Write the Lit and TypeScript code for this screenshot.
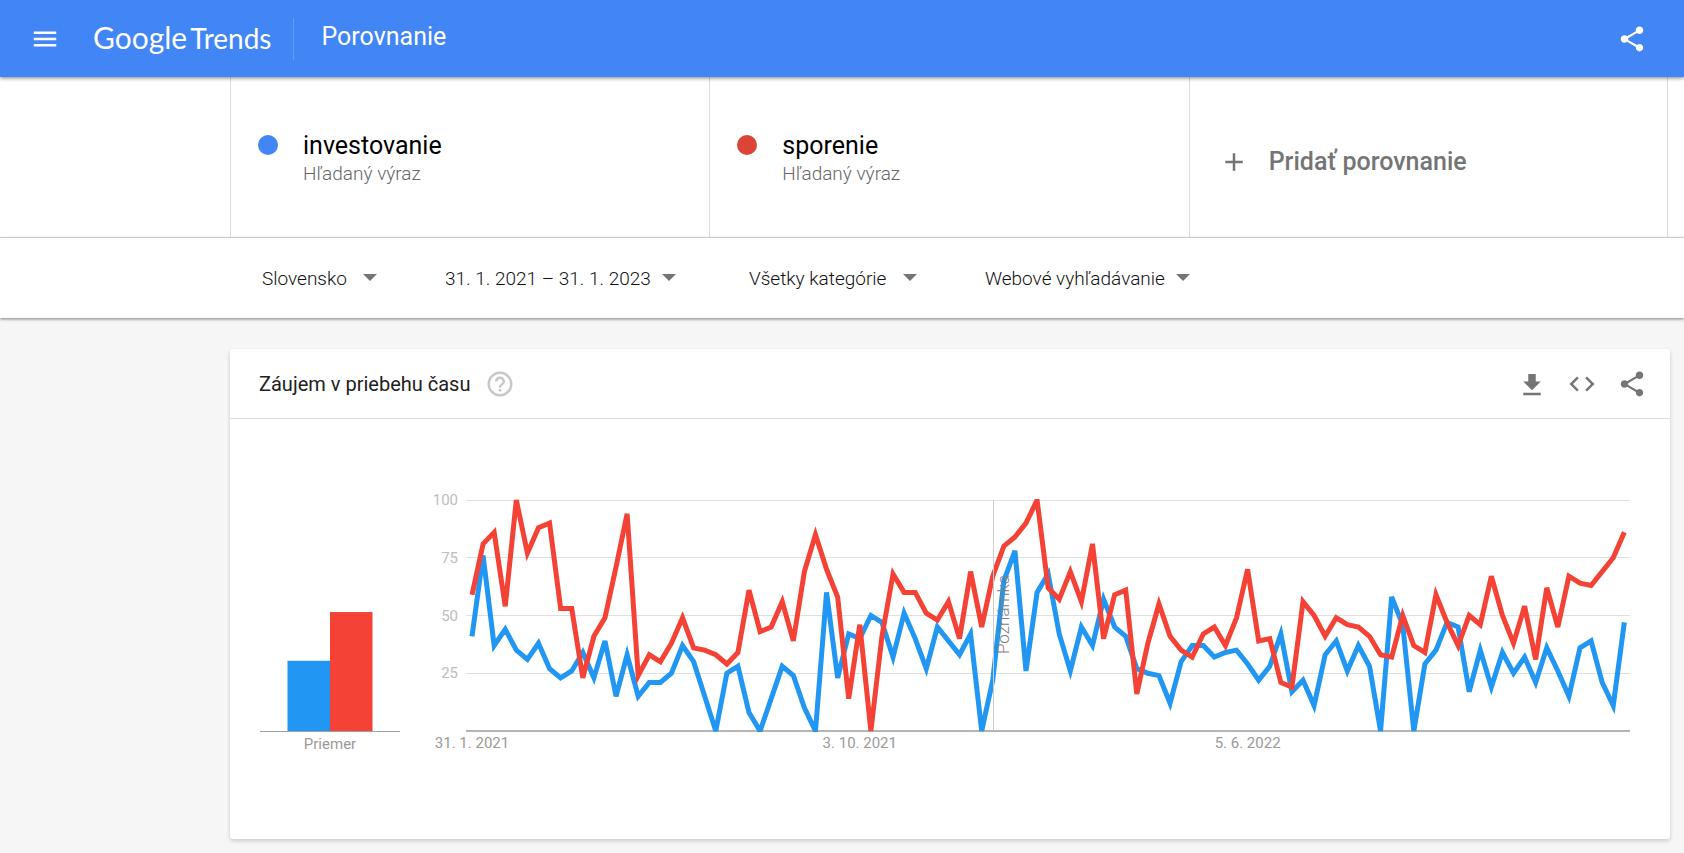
import { LitElement, html, svg, css } from "lit";
import { customElement, property } from "lit/decorators.js";

const SHARE =
  "M18 16.08c-.76 0-1.44.3-1.96.77L8.91 12.7c.05-.23.09-.46.09-.7s-.04-.47-.09-.7l7.05-4.11c.54.5 1.25.81 2.04.81 1.66 0 3-1.34 3-3s-1.34-3-3-3-3 1.34-3 3c0 .24.04.47.09.7L8.04 9.81C7.5 9.31 6.79 9 6 9c-1.66 0-3 1.34-3 3s1.34 3 3 3c.79 0 1.5-.31 2.04-.81l7.12 4.16c-.05.21-.08.43-.08.65 0 1.61 1.31 2.92 2.92 2.92s2.92-1.31 2.92-2.92-1.31-2.92-2.92-2.92z";
const ICONS: Record<string, string> = {
  menu: "M3 18h18v-2H3v2zm0-5h18v-2H3v2zm0-7v2h18V6H3z",
  share: SHARE,
  add: "M19 13h-6v6h-2v-6H5v-2h6V5h2v6h6v2z",
  help: "M11 18h2v-2h-2v2zm1-16C6.48 2 2 6.48 2 12s4.48 10 10 10 10-4.48 10-10S17.52 2 12 2zm0 18c-4.41 0-8-3.59-8-8s3.59-8 8-8 8 3.59 8 8-3.59 8-8 8zm0-14c-2.21 0-4 1.79-4 4h2c0-1.1.9-2 2-2s2 .9 2 2c0 2-3 1.75-3 5h2c0-2.25 3-2.5 3-5 0-2.21-1.79-4-4-4z",
  download: "M19 10h-4V4H9v6H5l7 7 7-7zM5 19v2h14v-2H5z",
  code: "M9.4 16.6L4.8 12l4.6-4.6L8 6l-6 6 6 6 1.4-1.4zm5.2 0l4.6-4.6-4.6-4.6L16 6l6 6-6 6-1.4-1.4z",
};

const icon = (name: string) => html`
  <svg class="icon" viewBox="0 0 24 24" aria-hidden="true"><path d=${ICONS[name]}></path></svg>
`;

const INVESTOVANIE = [
  41, 76, 37, 44, 35, 31, 38, 27, 23, 26, 34, 23, 39, 15, 33, 15, 21, 21, 25, 37, 30, 15, 0, 25, 28,
  8, 0, 14, 28, 24, 10, 0, 60, 23, 42, 40, 50, 47, 32, 51, 40, 27, 45, 39, 33, 42, 0, 22, 65, 78,
  26, 60, 68, 42, 26, 45, 37, 57, 45, 41, 27, 25, 24, 12, 30, 37, 37, 32, 34, 35, 29, 22, 28, 42, 17,
  22, 11, 33, 39, 26, 37, 28, 0, 58, 46, 0, 29, 35, 47, 45, 17, 35, 19, 34, 25, 32, 21, 36, 26, 15,
  36, 39, 21, 11, 47,
];
const SPORENIE = [
  59, 81, 86, 54, 100, 77, 88, 90, 53, 53, 23, 41, 49, 71, 94, 24, 33, 30, 38, 49, 36, 35, 33, 29, 34,
  61, 43, 45, 56, 39, 69, 85, 70, 58, 14, 46, 0, 41, 68, 60, 60, 51, 48, 56, 40, 69, 45, 67, 80, 84,
  90, 100, 62, 57, 69, 56, 81, 40, 59, 61, 16, 38, 55, 41, 35, 32, 42, 45, 37, 49, 70, 39, 40, 21, 19,
  56, 50, 41, 49, 46, 45, 41, 33, 32, 50, 37, 34, 59, 47, 37, 50, 46, 67, 50, 38, 54, 31, 62, 45, 67,
  64, 63, 69, 75, 86,
];

// Geometry shared by both charts, in viewBox units.
const BASE = 251;
const UNIT = 2.31;
const FIRST = 42;
const STEP = 11.08;
const yOf = (v: number) => BASE - v * UNIT;
const xOf = (i: number) => FIRST + i * STEP;

const chartStyles = css`
  :host {
    display: block;
    font-family: Roboto, sans-serif;
  }
  svg {
    display: block;
    width: 100%;
    height: auto;
    overflow: visible;
  }
  text {
    font-size: 15px;
    fill: #9a9a9a;
  }
  .middle {
    text-anchor: middle;
  }
  .axis {
    stroke: #9e9e9e;
    shape-rendering: crispEdges;
  }
  .blue {
    fill: #2196f3;
  }
  .red {
    fill: #f44336;
  }
`;

@customElement("average-chart")
class AverageChart extends LitElement {
  static styles = chartStyles;

  render() {
    const bars = [
      { tone: "blue", value: 30.4 },
      { tone: "red", value: 51.5 },
    ];
    return html`
      <svg viewBox="0 0 140 280" role="img" aria-label="Priemer">
        ${bars.map(
          (b, i) => svg`<rect class=${b.tone} x=${27.5 + i * 42.5} y=${yOf(b.value)}
            width="42.5" height=${b.value * UNIT}></rect>`
        )}
        <line class="axis" x1="0" x2="140" y1="251.5" y2="251.5"></line>
        <text class="middle" x="70" y="269">Priemer</text>
      </svg>
    `;
  }
}

@customElement("timeline-chart")
class TimelineChart extends LitElement {
  static styles = [
    chartStyles,
    css`
      .grid {
        stroke: #e0e0e0;
        shape-rendering: crispEdges;
      }
      .axis {
        stroke: #b5b5b5;
        stroke-width: 2;
      }
      .scale {
        text-anchor: end;
        fill: #bdbdbd;
      }
      .series {
        fill: none;
        stroke-width: 5;
      }
      .series.blue {
        stroke: #2196f3;
      }
      .series.red {
        stroke: #f44336;
      }
      .note-line {
        stroke: #cccccc;
        shape-rendering: crispEdges;
      }
      .note {
        font-size: 17px;
        font-weight: 300;
        fill: #808080;
      }
    `,
  ];

  render() {
    const points = (data: number[]) => data.map((v, i) => `${xOf(i)},${yOf(v)}`).join(" ");
    const dates = [
      { at: 0, text: "31. 1. 2021" },
      { at: 35, text: "3. 10. 2021" },
      { at: 70, text: "5. 6. 2022" },
    ];
    return html`
      <svg viewBox="0 0 1210 280" role="img" aria-label="Záujem v priebehu času">
        <clipPath id="plot"><rect x="36" y="19" width="1164" height="233"></rect></clipPath>
        ${[25, 50, 75, 100].map(
          (v) => svg`
            <line class="grid" x1="36" x2="1200" y1=${yOf(v)} y2=${yOf(v)}></line>
            <text class="scale" x="28" y=${yOf(v) + 5}>${v}</text>`
        )}
        <line class="axis" x1="36" x2="1200" y1=${BASE} y2=${BASE}></line>
        <g clip-path="url(#plot)">
          <polyline class="series blue" points=${points(INVESTOVANIE)}></polyline>
          <polyline class="series red" points=${points(SPORENIE)}></polyline>
        </g>
        <line class="note-line" x1="563.5" x2="563.5" y1="20" y2=${BASE}></line>
        <text class="note" transform="translate(579 174) rotate(-90)">Poznámka</text>
        ${dates.map((d) => svg`<text class="middle" x=${xOf(d.at)} y="268">${d.text}</text>`)}
      </svg>
    `;
  }
}

@customElement("filter-select")
class FilterSelect extends LitElement {
  @property() label = "";
  @property() value = "";
  @property({ type: Boolean, reflect: true }) roomy = false;

  static styles = css`
    :host {
      display: block;
      --arrow-room: 25px;
    }
    :host([roomy]) {
      --arrow-room: 30px;
    }
    .field {
      display: grid;
      align-items: center;
      margin-right: calc(98px - var(--arrow-room));
    }
    select,
    svg {
      grid-area: 1 / 1;
    }
    select {
      appearance: none;
      border: 0;
      margin: 0;
      padding: 0 var(--arrow-room) 0 0;
      background: none;
      color: #111111;
      font: 300 19px/30px Roboto, sans-serif;
      cursor: pointer;
    }
    svg {
      justify-self: end;
      width: 14px;
      height: 7px;
      margin-bottom: 4px;
      fill: #757575;
      pointer-events: none;
    }
  `;

  render() {
    return html`
      <div class="field">
        <select aria-label=${this.label}>
          <option>${this.value}</option>
        </select>
        <svg viewBox="0 0 14 7" aria-hidden="true"><path d="M0 0h14L7 7z"></path></svg>
      </div>
    `;
  }
}

@customElement("app-root")
class AppRoot extends LitElement {
  static styles = css`
    :host {
      display: block;
      min-height: 100vh;
      background: #f6f6f6;
      font-family: Roboto, sans-serif;
      color: #212121;
      --inset: 230px;
    }
    * {
      box-sizing: border-box;
    }
    h1,
    h2,
    p {
      margin: 0;
      font-weight: 400;
    }
    button {
      display: flex;
      align-items: center;
      padding: 0;
      border: 0;
      background: none;
      color: inherit;
      font: inherit;
      cursor: pointer;
    }
    .icon {
      display: block;
      width: 30px;
      height: 30px;
      fill: currentColor;
    }
    .bar {
      position: relative;
      z-index: 1;
      display: flex;
      align-items: center;
      height: 77px;
      padding: 0 37px 0 30px;
      background: #4285f4;
      color: #ffffff;
      box-shadow: 0 1px 4px rgba(0, 0, 0, 0.5);
    }
    .logo {
      display: flex;
      align-items: baseline;
      gap: 3px;
      margin-left: 33px;
      padding-bottom: 2px;
      color: inherit;
      font-family: Lato, sans-serif;
      line-height: 36px;
      text-decoration: none;
    }
    .brand {
      font-size: 30px;
    }
    .product {
      font-size: 28px;
    }
    .bar h1 {
      margin-left: 21px;
      padding: 4px 0 8px 28px;
      border-left: 1px solid #689df6;
      font-size: 25px;
      line-height: 30px;
    }
    .bar .action {
      margin-left: auto;
    }
    .terms {
      display: grid;
      grid-template-columns: repeat(3, 1fr);
      height: 161px;
      padding: 0 16px 0 var(--inset);
      background: #ffffff;
      border-bottom: 1px solid #dcdcdc;
    }
    .term {
      border-left: 1px solid #dcdcdc;
    }
    .term:last-child {
      border-right: 1px solid #dcdcdc;
    }
    .term.query {
      display: flex;
      gap: 25px;
      padding: 54px 27px 0;
    }
    .dot {
      width: 20px;
      height: 20px;
      margin-top: 4px;
      border-radius: 50%;
    }
    .dot.blue {
      background: #4285f4;
    }
    .dot.red {
      background: #db4437;
    }
    .query h2 {
      color: #000000;
      font-size: 25px;
      line-height: 30px;
    }
    .query p {
      color: #666666;
      font-size: 19px;
      font-weight: 300;
      line-height: 26px;
    }
    .term.add {
      display: flex;
      align-items: flex-start;
      padding: 70px 0 0 29px;
      color: #757575;
    }
    .add button {
      gap: 20px;
      font-size: 25px;
      font-weight: 500;
      line-height: 30px;
    }
    .filters {
      position: relative;
      display: flex;
      align-items: center;
      height: 80px;
      padding: 2px 0 0 calc(var(--inset) + 32px);
      background: #ffffff;
      box-shadow: 0 1px 3px rgba(0, 0, 0, 0.5);
    }
    main {
      padding: 31px 14px 14px var(--inset);
    }
    .card {
      background: #ffffff;
      border-radius: 3px;
      box-shadow: 0 2px 4px rgba(0, 0, 0, 0.18);
    }
    .card-head {
      display: flex;
      align-items: center;
      height: 70px;
      padding: 0 23px 0 29px;
      border-bottom: 1px solid #dcdcdc;
    }
    .card-head h2 {
      font-size: 20px;
      line-height: 30px;
    }
    .help {
      margin-left: 15px;
      color: #c8c8c8;
    }
    .tools {
      display: flex;
      gap: 20px;
      margin-left: auto;
      color: #757575;
    }
    .charts {
      display: grid;
      grid-template-columns: 140fr 1210fr;
      gap: 30px;
      padding: 61px 30px 79px;
    }
  `;

  render() {
    return html`
      <header class="bar">
        <button aria-label="Ponuka">${icon("menu")}</button>
        <a class="logo" href="#"><span class="brand">Google</span><span class="product">Trends</span></a>
        <h1>Porovnanie</h1>
        <button class="action" aria-label="Zdieľať">${icon("share")}</button>
      </header>
      <section class="terms">
        ${this.term("blue", "investovanie")} ${this.term("red", "sporenie")}
        <div class="term add"><button>${icon("add")}<span>Pridať porovnanie</span></button></div>
      </section>
      <nav class="filters">
        <filter-select roomy label="Región" value="Slovensko"></filter-select>
        <filter-select label="Obdobie" value="31. 1. 2021 – 31. 1. 2023"></filter-select>
        <filter-select roomy label="Kategória" value="Všetky kategórie"></filter-select>
        <filter-select label="Typ vyhľadávania" value="Webové vyhľadávanie"></filter-select>
      </nav>
      <main>
        <section class="card">
          <div class="card-head">
            <h2>Záujem v priebehu času</h2>
            <button class="help" aria-label="Pomocník">${icon("help")}</button>
            <div class="tools">
              <button aria-label="Stiahnuť">${icon("download")}</button>
              <button aria-label="Vložiť">${icon("code")}</button>
              <button aria-label="Zdieľať">${icon("share")}</button>
            </div>
          </div>
          <div class="charts">
            <average-chart></average-chart>
            <timeline-chart></timeline-chart>
          </div>
        </section>
      </main>
    `;
  }

  private term(tone: string, name: string) {
    return html`
      <div class="term query">
        <span class="dot ${tone}"></span>
        <div>
          <h2>${name}</h2>
          <p>Hľadaný výraz</p>
        </div>
      </div>
    `;
  }
}
